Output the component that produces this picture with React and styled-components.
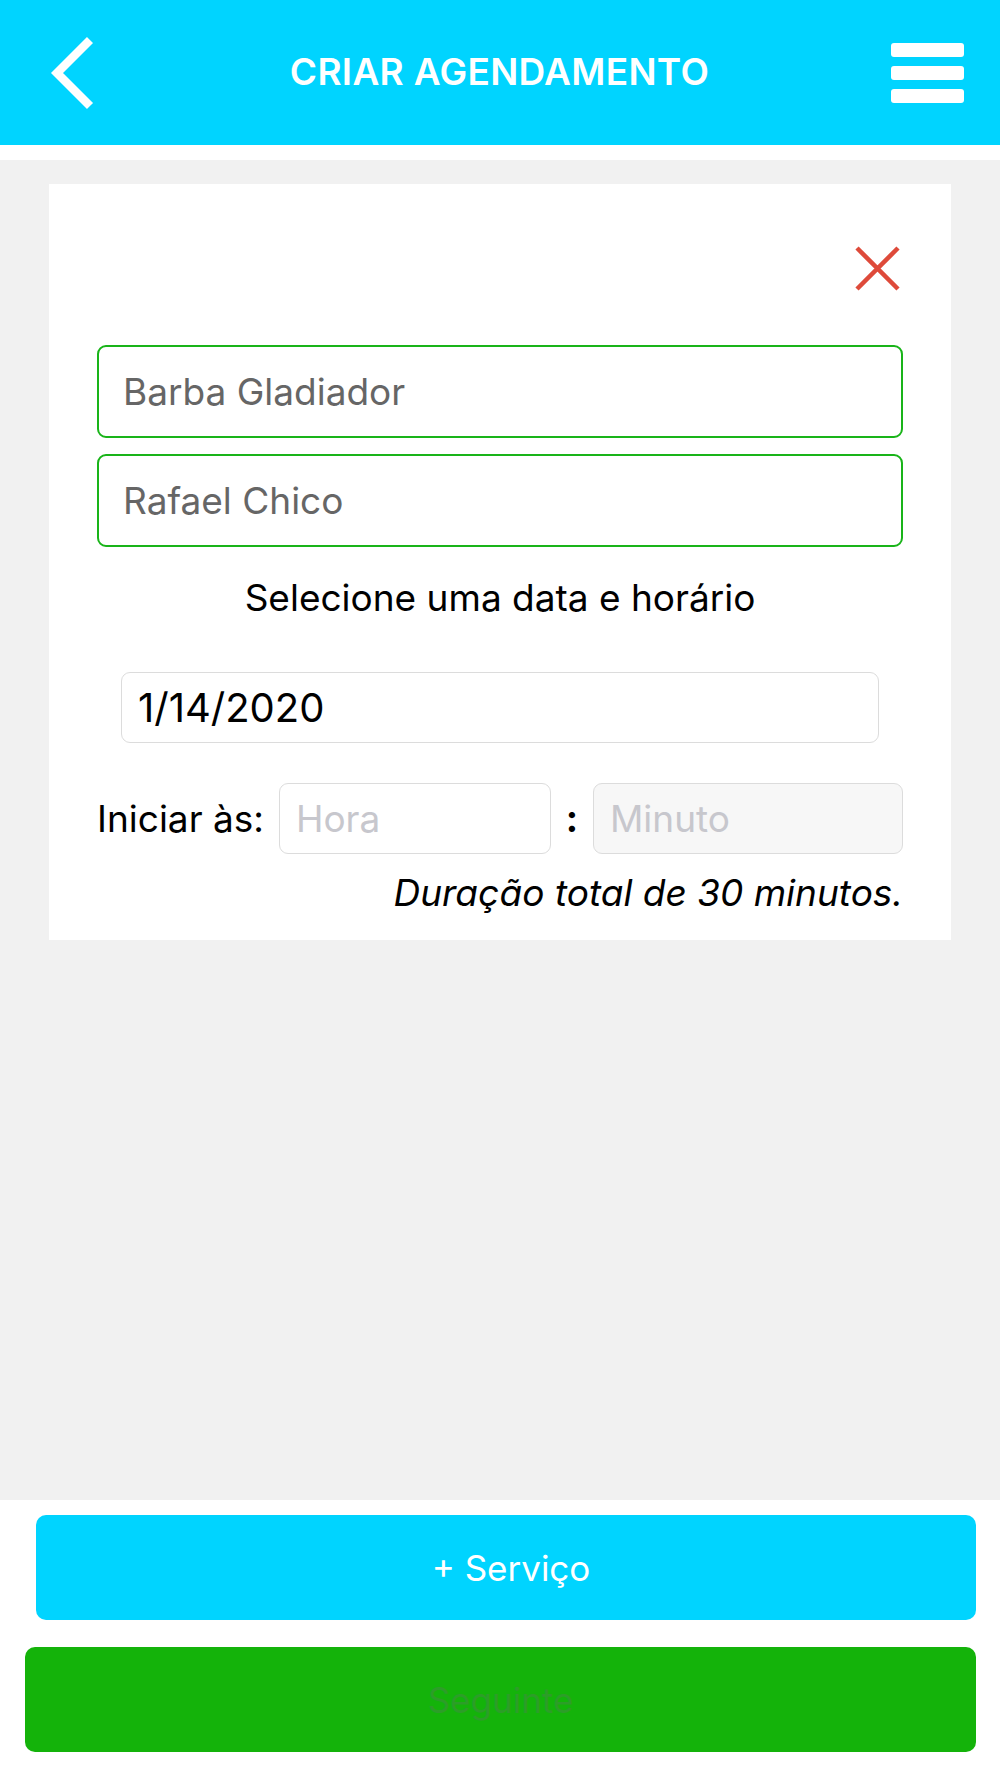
import React from "react";
import styled, { createGlobalStyle } from "styled-components";

const Global = createGlobalStyle`
  html, body { margin: 0; padding: 0; }
  body { background: #ffffff; font-family: Inter, "Noto Sans", sans-serif; }
  * { box-sizing: border-box; }
`;

const Page = styled.div`
  width: 1000px;
  height: 1778px;
  display: flex;
  flex-direction: column;
  background: #ffffff;
`;

const Header = styled.header`
  height: 145px;
  flex: none;
  background: #00d4ff;
  display: flex;
  align-items: center;
  justify-content: space-between;
  padding: 0 36px 0 48px;
`;

const IconButton = styled.button`
  border: 0;
  background: transparent;
  padding: 0;
  display: flex;
  align-items: center;
  justify-content: center;
  width: ${(p) => p.w}px;
  height: ${(p) => p.h}px;
`;

const Title = styled.h1`
  margin: -2px 0 0 12px;
  color: #ffffff;
  font-size: 37px;
  font-weight: 600;
  letter-spacing: 0.3px;
`;

const Burger = styled.div`
  width: 73px;
  display: flex;
  flex-direction: column;
  gap: 9px;
`;

const BurgerBar = styled.span`
  display: block;
  height: 14px;
  border-radius: 3px;
  background: #ffffff;
`;

const Strip = styled.div`
  height: 15px;
  flex: none;
  background: #ffffff;
`;

const Main = styled.main`
  flex: 1;
  background: #f1f1f1;
  padding: 24px 49px 0 49px;
`;

const Card = styled.section`
  background: #ffffff;
  height: 756px;
  padding: 61px 48px 0 48px;
  display: flex;
  flex-direction: column;
`;

const CloseRow = styled.div`
  display: flex;
  justify-content: flex-end;
  padding-right: 2px;
  margin-bottom: 53px;
`;

const OutlineInput = styled.div`
  height: 93px;
  border: 2px solid #19b419;
  border-radius: 9px;
  display: flex;
  align-items: center;
  padding-left: 24px;
  font-size: 37px;
  color: #666666;
  margin-bottom: ${(p) => p.mb || 0}px;
`;

const Prompt = styled.p`
  margin: 30px 0 0 0;
  text-align: center;
  font-size: 37px;
  color: #000000;
  line-height: 42px;
`;

const DateBox = styled.div`
  margin: 53px 24px 0 24px;
  height: 71px;
  border: 1.5px solid #dcdcdc;
  border-radius: 9px;
  display: flex;
  align-items: center;
  padding-left: 16px;
  font-size: 40px;
  color: #000000;
`;

const TimeRow = styled.div`
  margin-top: 40px;
  height: 71px;
  display: flex;
  align-items: center;
`;

const Label = styled.span`
  font-size: 37px;
  color: #000000;
  margin-right: 15px;
`;

const TimeBox = styled.div`
  height: 71px;
  width: ${(p) => (p.w ? `${p.w}px` : "auto")};
  flex: ${(p) => (p.w ? "none" : 1)};
  border: 1.5px solid #dcdcdc;
  border-radius: 9px;
  background: ${(p) => (p.disabled ? "#f7f7f7" : "#ffffff")};
  display: flex;
  align-items: center;
  padding-left: 16px;
  font-size: 37px;
  color: #c7c7cd;
`;

const Colon = styled.span`
  width: 42px;
  text-align: center;
  font-size: 37px;
  font-weight: 700;
  color: #000000;
`;

const Duration = styled.p`
  margin: 18px 0 0 0;
  text-align: right;
  font-size: 37px;
  font-style: italic;
  color: #000000;
  line-height: 42px;
`;

const Footer = styled.footer`
  height: 278px;
  flex: none;
  background: #ffffff;
  padding: 15px 24px 0 0;
  display: flex;
  flex-direction: column;
  gap: 27px;
`;

const ActionButton = styled.button`
  height: 105px;
  margin-left: ${(p) => p.ml}px;
  padding: 0 0 0 ${(p) => p.pl || 0}px;
  border: 0;
  border-radius: 10px;
  background: ${(p) => p.bg};
  color: ${(p) => p.fg};
  font-family: Inter, "Noto Sans", sans-serif;
  font-size: 35px;
  display: flex;
  align-items: center;
  justify-content: center;
`;

export default function App() {
  return (
    <>
      <Global />
      <Page>
        <Header>
          <IconButton w={48} h={74} aria-label="Voltar">
            <svg width="48" height="74" viewBox="0 0 48 74">
              <path d="M42 4 L9 37 L42 70" fill="none" stroke="#ffffff" strokeWidth="8.5" strokeLinejoin="miter" />
            </svg>
          </IconButton>
          <Title>CRIAR AGENDAMENTO</Title>
          <Burger>
            <BurgerBar />
            <BurgerBar />
            <BurgerBar />
          </Burger>
        </Header>
        <Strip />
        <Main>
          <Card>
            <CloseRow>
              <IconButton w={47} h={47} aria-label="Fechar">
                <svg width="47" height="47" viewBox="0 0 47 47">
                  <path d="M3 3 L44 44 M44 3 L3 44" stroke="#de4a3a" strokeWidth="4.5" />
                </svg>
              </IconButton>
            </CloseRow>
            <OutlineInput mb={16}>Barba Gladiador</OutlineInput>
            <OutlineInput>Rafael Chico</OutlineInput>
            <Prompt>Selecione uma data e horário</Prompt>
            <DateBox>1/14/2020</DateBox>
            <TimeRow>
              <Label>Iniciar às:</Label>
              <TimeBox w={272}>Hora</TimeBox>
              <Colon>:</Colon>
              <TimeBox disabled>Minuto</TimeBox>
            </TimeRow>
            <Duration>Duração total de 30 minutos.</Duration>
          </Card>
        </Main>
        <Footer>
          <ActionButton ml={36} pl={10} bg="#00d4ff" fg="#ffffff">+ Serviço</ActionButton>
          <ActionButton ml={25} bg="#14b30a" fg="#2c9e28">Seguinte</ActionButton>
        </Footer>
      </Page>
    </>
  );
}
